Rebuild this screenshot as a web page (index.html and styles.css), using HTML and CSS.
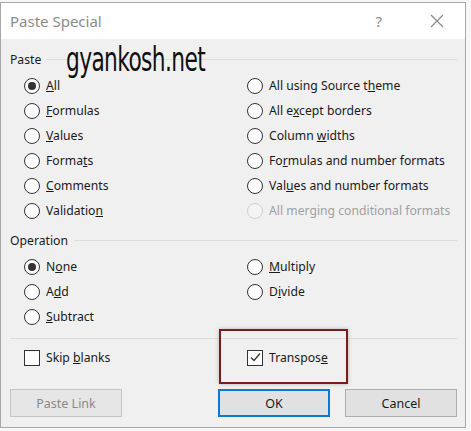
FILE: index.html
```html
<!DOCTYPE html>
<html lang="en">
<head>
    <meta charset="UTF-8">
    <title>Paste Special</title>
    <link rel="stylesheet" href="styles.css">
</head>
<body>
    <div class="window">
        <div class="titlebar">
            <span class="title">Paste Special</span>
            <span class="help">?</span>
            <span class="close">
                <svg width="14" height="14" viewBox="0 0 14 14"><path d="M1 1 L13 13 M13 1 L1 13" stroke="#8a8a8a" stroke-width="1.2" fill="none"/></svg>
            </span>
        </div>

        <div class="content">
            <div class="group-title"><span>Paste</span></div>
            <div class="options">
                <label class="option"><span class="radio checked"></span><span><u>A</u>ll</span></label>
                <label class="option"><span class="radio"></span><span>All using Source t<u>h</u>eme</span></label>
                <label class="option"><span class="radio"></span><span><u>F</u>ormulas</span></label>
                <label class="option"><span class="radio"></span><span>All e<u>x</u>cept borders</span></label>
                <label class="option"><span class="radio"></span><span><u>V</u>alues</span></label>
                <label class="option"><span class="radio"></span><span>Column <u>w</u>idths</span></label>
                <label class="option"><span class="radio"></span><span>Forma<u>t</u>s</span></label>
                <label class="option"><span class="radio"></span><span>Fo<u>r</u>mulas and number formats</span></label>
                <label class="option"><span class="radio"></span><span><u>C</u>omments</span></label>
                <label class="option"><span class="radio"></span><span>Val<u>u</u>es and number formats</span></label>
                <label class="option"><span class="radio"></span><span>Validatio<u>n</u></span></label>
                <label class="option disabled"><span class="radio"></span><span>All merging conditional formats</span></label>
            </div>

            <div class="group-title operation"><span>Operation</span></div>
            <div class="options">
                <label class="option"><span class="radio checked"></span><span>N<u>o</u>ne</span></label>
                <label class="option"><span class="radio"></span><span><u>M</u>ultiply</span></label>
                <label class="option"><span class="radio"></span><span>A<u>d</u>d</span></label>
                <label class="option"><span class="radio"></span><span>D<u>i</u>vide</span></label>
                <label class="option"><span class="radio"></span><span><u>S</u>ubtract</span></label>
            </div>

            <div class="separator"></div>

            <div class="options checks">
                <label class="option"><span class="checkbox"></span><span>Skip <u>b</u>lanks</span></label>
                <label class="option"><span class="checkbox">
                    <svg width="13" height="13" viewBox="0 0 13 13"><path d="M2 6.5 L5 9.5 L11 2.5" stroke="#333" stroke-width="1.2" fill="none"/></svg>
                </span><span>Transpos<u>e</u></span></label>
            </div>

            <div class="buttons">
                <button class="btn" disabled>Paste Link</button>
                <div class="right-buttons">
                    <button class="btn default">OK</button>
                    <button class="btn">Cancel</button>
                </div>
            </div>
        </div>

        <div class="highlight"></div>
        <div class="watermark">gyankosh.net</div>
    </div>
</body>
</html>
```

FILE: styles.css
```css
body {
    margin: 0;
    background-color: #f7f7f7;
    font-family: "Noto Sans", "Open Sans", sans-serif;
    font-size: 12.2px;
    color: #1a1a1a;
}

.window {
    position: relative;
    width: 464px;
    height: 424px;
    margin-top: 2px;
    border: 1px solid #a8a8a8;
    background-color: #f0f0f0;
}

.titlebar {
    display: flex;
    align-items: center;
    height: 36px;
    padding-left: 9px;
    background-color: #fff;
}

.title {
    flex: 1;
    font-size: 15px;
    color: #8c8c8c;
}

.help {
    font-size: 15px;
    color: #8c8c8c;
    margin-right: 48px;
}

.close {
    display: flex;
    margin-right: 21px;
}

.content {
    padding: 11px 8px 0 9px;
}

.group-title {
    display: flex;
    align-items: center;
    gap: 6px;
    height: 18px;
}

.group-title::after {
    content: "";
    flex: 1;
    border-top: 1px solid #dcdcdc;
}

.operation {
    margin-top: 8px;
}

.options {
    display: grid;
    grid-template-columns: 223px 1fr;
    padding-left: 14px;
    margin-top: 5px;
}

.option {
    display: flex;
    align-items: center;
    gap: 6px;
    height: 25px;
    white-space: nowrap;
}

.radio {
    width: 14px;
    height: 14px;
    border: 1px solid #333;
    border-radius: 50%;
    background-color: #fff;
    display: flex;
    align-items: center;
    justify-content: center;
}

.radio.checked::after {
    content: "";
    width: 8px;
    height: 8px;
    border-radius: 50%;
    background-color: #333;
}

.disabled {
    color: #a0a0a0;
}

.disabled .radio {
    border-color: #cfcfcf;
    background-color: #f4f4f4;
}

.separator {
    border-top: 1px solid #dcdcdc;
    margin-top: 9px;
}

.checks {
    margin-top: 6px;
}

.checkbox {
    width: 14px;
    height: 14px;
    border: 1px solid #333;
    background-color: #fff;
    display: flex;
    align-items: center;
    justify-content: center;
}

.buttons {
    display: flex;
    justify-content: space-between;
    margin-top: 19px;
}

.right-buttons {
    display: flex;
    gap: 15px;
}

.btn {
    width: 112px;
    height: 28px;
    font-family: inherit;
    font-size: 12.5px;
    color: #1a1a1a;
    background-color: #e1e1e1;
    border: 1px solid #adadad;
    padding: 0;
}

.btn:disabled {
    color: #8a8a8a;
    background-color: #e6e6e6;
    border-color: #c4c4c4;
}

.btn.default {
    border: 2px solid #0a78d4;
}

.highlight {
    position: absolute;
    left: 218px;
    top: 326px;
    width: 125px;
    height: 51px;
    border: 2px solid #7b1c1c;
    box-shadow: 0 0 4px rgba(0, 0, 0, 0.25);
}

.watermark {
    position: absolute;
    left: 65px;
    top: 36px;
    font-family: "DejaVu Sans", sans-serif;
    font-size: 34px;
    color: #111;
    transform: scaleX(0.64);
    transform-origin: left;
    letter-spacing: -1px;
}
```
